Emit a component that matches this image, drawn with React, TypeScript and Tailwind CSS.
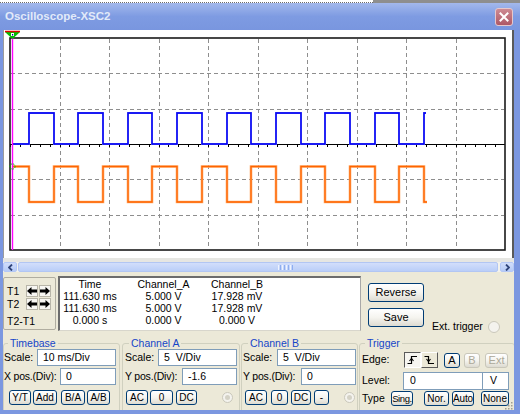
import React from "react";

const F = "font-['Liberation_Sans',Arial,sans-serif]";

function Btn({ className = "", children, disabled = false }: { className?: string; children: React.ReactNode; disabled?: boolean }) {
  return (
    <div
      className={`flex items-center justify-center rounded-[3px] border shrink-0 leading-none bg-linear-to-b from-white via-[#F5F4EF] to-[#DDDBD1] ${
        disabled ? "border-[#C9C7BA] text-[#ACA899]" : "border-[#003C74] text-black"
      } ${className}`}
    >
      {children}
    </div>
  );
}

function Inp({ className = "", children }: { className?: string; children: React.ReactNode }) {
  return (
    <div className={`h-[17px] bg-white border border-[#7F9DB9] flex items-center pl-[5px] whitespace-pre shrink-0 ${className}`}>
      {children}
    </div>
  );
}

function ArrBtn({ dir }: { dir: "l" | "r" }) {
  return (
    <div className="w-[12px] h-[12px] flex items-center justify-center bg-[#F7F6F2] border border-[#B8B5A8] shrink-0">
      <svg width="10" height="8" viewBox="0 0 10 8">
        {dir === "l" ? (
          <path d="M0 4 L4.5 0 V2.6 H10 V5.4 H4.5 V8 Z" fill="#000" />
        ) : (
          <path d="M10 4 L5.5 0 V2.6 H0 V5.4 H5.5 V8 Z" fill="#000" />
        )}
      </svg>
    </div>
  );
}

function Radio({ dot = true, className = "" }: { dot?: boolean; className?: string }) {
  return (
    <div className={`w-[11px] h-[11px] rounded-full border border-[#CAC8BB] bg-[#F4F3EE] flex items-center justify-center shrink-0 ${className}`}>
      {dot && <div className="w-[5px] h-[5px] rounded-full bg-[#D4D2C6]" />}
    </div>
  );
}

function Plot() {
  const plotL = 6;
  const plotR = 501;
  const plotT = 8;
  const plotB = 220;
  const midY = 114;
  const vx = Array.from({ length: 9 }, (_, i) => Math.round(plotL + 49.5 * (i + 1)) + 0.5);
  const hy = [1, 2, 4, 5].map((j) => Math.round(plotT + (212 / 6) * j) + 0.5);
  const ticks = Array.from({ length: 50 }, (_, i) => Math.round(plotL + 9.9 * i) + 0.5);
  const rises = Array.from({ length: 9 }, (_, k) => Math.round(25 + 49.4 * k));
  let blue = `M8 ${midY}`;
  let orange = `M8 136.5`;
  for (let k = 0; k < 8; k++) {
    const r = rises[k];
    const f = Math.round(25 + 49.4 * k + 24.6);
    blue += ` H${r} V83 H${f} V${midY}`;
    orange += ` H${r} V172 H${f} V136.5`;
  }
  const r8 = rises[8];
  blue += ` H${r8} V83 H${r8 + 2}`;
  orange += ` H${r8} V172 H${r8 + 3}`;

  return (
    <svg width="508" height="228" viewBox="0 0 508 228" className="block">
      <rect x="0" y="0" width="508" height="228" fill="#ffffff" />
      {vx.map((x) => (
        <line key={"v" + x} x1={x} y1={plotT + 1} x2={x} y2={plotB - 1} stroke="#8E8E8E" strokeWidth="1" strokeDasharray="4 3" />
      ))}
      {hy.map((y) => (
        <line key={"h" + y} x1={plotL + 1} y1={y} x2={plotR - 1} y2={y} stroke="#8E8E8E" strokeWidth="1" strokeDasharray="4 3" />
      ))}
      <line x1={plotL} y1={midY + 0.5} x2={plotR} y2={midY + 0.5} stroke="#000" strokeWidth="1.2" />
      {ticks.map((x) => (
        <line key={"t" + x} x1={x} y1={midY + 1} x2={x} y2={midY + 3} stroke="#000" strokeWidth="1" />
      ))}
      <rect x={plotL} y={plotT} width={plotR - plotL} height={plotB - plotT} fill="none" stroke="#1A1A1A" strokeWidth="1.6" />
      <path d={orange} fill="none" stroke="#FFB070" strokeWidth="2.6" />
      <path d={orange} fill="none" stroke="#FF6400" strokeWidth="1.3" />
      <path d={blue} fill="none" stroke="#6A6AFF" strokeWidth="2" />
      <path d={blue} fill="none" stroke="#0000F0" strokeWidth="1.3" />
      <line x1="8.5" y1={plotT} x2="8.5" y2={plotB} stroke="#FF00FF" strokeWidth="1.4" />
      <circle cx="8.5" cy="136.5" r="2.6" fill="none" stroke="#00C000" strokeWidth="1" strokeDasharray="1.5 1" />
      <polygon points="1,2 16,2 8.5,9" fill="#00C000" />
      <line x1="1" y1="1.5" x2="16" y2="1.5" stroke="#E00000" strokeWidth="1.5" />
      <rect x="7" y="3" width="3" height="3" fill="#ffffff" />
      <rect x="8" y="4" width="1.2" height="1.5" fill="#0000A0" />
    </svg>
  );
}

export default function App() {
  return (
    <div className={`w-[520px] h-[414px] flex flex-col overflow-hidden ${F}`}>
      <div className="h-[3px] flex shrink-0">
        <div className="w-[373px] bg-white border-b border-dotted border-[#6A6A6A]" />
        <div className="flex-1 bg-[#8E8E8E]" />
      </div>
      <div className="flex-1 flex flex-col bg-[#7B97E0] min-h-0">
        {/* Title bar */}
        <div className="h-[27px] shrink-0 flex items-center justify-between pl-[5px] pr-[7px] bg-linear-to-b from-[#A3B8EC] via-[#7E9BE2] to-[#7996DF]">
          <span className="text-[11.5px] font-bold text-[#E2EAF9]">Oscilloscope-XSC2</span>
          <div className="w-[18px] h-[18px] rounded-[3px] border border-[#E6C8CC] bg-linear-to-b from-[#CD8A93] to-[#AE5866] flex items-center justify-center">
            <svg width="10" height="10" viewBox="0 0 10 10">
              <path d="M1.5 1.5 L8.5 8.5 M8.5 1.5 L1.5 8.5" stroke="#fff" strokeWidth="2" strokeLinecap="square" />
            </svg>
          </div>
        </div>
        {/* Body */}
        <div className="flex-1 flex flex-col pl-[3px] pr-[6px] pb-[4px] min-h-0">
          <div className="flex-1 flex flex-col bg-[#ECE9D8] min-h-0">
            <div className="h-[228px] shrink-0 bg-white border-l border-l-[#9C9C9C] border-r-2 border-r-[#5A5A5A]">
              <Plot />
            </div>
            <div className="h-[4px] shrink-0 bg-[#E6E6E2]" />
            {/* Scrollbar */}
            <div className="h-[10px] shrink-0 flex bg-[#F3F2EC]">
              <div className="w-[14px] h-full rounded-[2px] border border-[#B4C8F6] bg-linear-to-b from-[#D0DDFB] to-[#B6CBF7] flex items-center justify-center">
                <svg width="5" height="7" viewBox="0 0 5 7">
                  <path d="M4 0.5 L1 3.5 L4 6.5" fill="none" stroke="#30457A" strokeWidth="1.8" />
                </svg>
              </div>
              <div className="flex-1 flex pl-[1px] pr-[2px]">
                <div className="flex-1 h-full rounded-[2px] border border-[#B2C6F3] bg-linear-to-b from-[#D2DEFB] to-[#BACEF8] flex items-center pl-[259px] gap-[1px]">
                  <div className="w-[1px] h-[5px] bg-[#EEF3FE]" />
                  <div className="w-[1px] h-[5px] bg-[#8EAEF0]" />
                  <div className="w-[1px] h-[5px] bg-[#EEF3FE]" />
                  <div className="w-[1px] h-[5px] bg-[#8EAEF0]" />
                  <div className="w-[1px] h-[5px] bg-[#EEF3FE]" />
                  <div className="w-[1px] h-[5px] bg-[#8EAEF0]" />
                  <div className="w-[1px] h-[5px] bg-[#EEF3FE]" />
                  <div className="w-[1px] h-[5px] bg-[#8EAEF0]" />
                </div>
              </div>
              <div className="w-[14px] h-full rounded-[2px] border border-[#B4C8F6] bg-linear-to-b from-[#D0DDFB] to-[#B6CBF7] flex items-center justify-center">
                <svg width="5" height="7" viewBox="0 0 5 7">
                  <path d="M1 0.5 L4 3.5 L1 6.5" fill="none" stroke="#30457A" strokeWidth="1.8" />
                </svg>
              </div>
            </div>
            {/* Panel */}
            <div className="flex-1 relative overflow-hidden min-h-0 text-black text-[10.5px]">
              {/* Row 1 */}
              <div className="h-[65px] flex items-start">
                <div className="w-[53px] h-[53px] mt-[5px] border border-[#B0ADA0] rounded-[2px] pl-[3px] pt-[7px] leading-[12px] shrink-0">
                  <div className="flex items-center h-[12px]">
                    <span className="w-[19px]">T1</span>
                    <ArrBtn dir="l" />
                    <div className="w-[1px]" />
                    <ArrBtn dir="r" />
                  </div>
                  <div className="flex items-center h-[12px] mt-[1px]">
                    <span className="w-[19px]">T2</span>
                    <ArrBtn dir="l" />
                    <div className="w-[1px]" />
                    <ArrBtn dir="r" />
                  </div>
                  <div className="h-[12px] mt-[5px]">T2-T1</div>
                </div>
                <div className="ml-[2px] mt-[4px] w-[303px] h-[55px] bg-white border-t-2 border-l-2 border-b border-r border-t-[#6C6C6C] border-l-[#6C6C6C] border-b-[#D8D6CC] border-r-[#A8A8A8] leading-[12px] shrink-0">
                  <div className="grid grid-cols-[60px_87px_60px] text-center">
                    <div>Time</div>
                    <div>Channel_A</div>
                    <div>Channel_B</div>
                    <div>111.630 ms</div>
                    <div>5.000 V</div>
                    <div>17.928 mV</div>
                    <div>111.630 ms</div>
                    <div>5.000 V</div>
                    <div>17.928 mV</div>
                    <div>0.000 s</div>
                    <div>0.000 V</div>
                    <div>0.000 V</div>
                  </div>
                </div>
                <div className="ml-[7px] mt-[11px] w-[56px] flex flex-col shrink-0">
                  <Btn className="h-[19px] text-[11px]">Reverse</Btn>
                  <Btn className="h-[19px] mt-[6px] text-[11px]">Save</Btn>
                </div>
                <div className="ml-[8px] mt-[49px] h-[12px] flex items-center shrink-0">
                  <span>Ext. trigger</span>
                  <Radio dot={false} className="ml-[5px] w-[12px] h-[12px]" />
                </div>
              </div>
              {/* Row 2 */}
              <div className="flex items-start">
                {/* Timebase */}
                <fieldset className="w-[117px] h-[78px] border border-[#D0D0BF] rounded-[3px] shrink-0 min-w-0">
                  <legend className="ml-[4px] px-[2px] text-[#1546C8] text-[10.5px] leading-[12px]">Timebase</legend>
                  <div className="flex items-center h-[17px]">
                    <span className="w-[33px]">Scale:</span>
                    <Inp className="w-[79px]">10 ms/Div</Inp>
                  </div>
                  <div className="flex items-center h-[17px] mt-[2px]">
                    <span className="w-[56px] tracking-[-0.2px]">X pos.(Div):</span>
                    <Inp className="w-[56px]">0</Inp>
                  </div>
                  <div className="flex items-center h-[15px] mt-[5px] pl-[5px] text-[10px]">
                    <Btn className="w-[22px] h-[15px]">Y/T</Btn>
                    <Btn className="w-[24px] h-[15px] ml-[2px]">Add</Btn>
                    <Btn className="w-[24px] h-[15px] ml-[4px]">B/A</Btn>
                    <Btn className="w-[23px] h-[15px] ml-[2px]">A/B</Btn>
                  </div>
                </fieldset>
                {/* Channel A */}
                <fieldset className="ml-[2px] w-[118px] h-[78px] border border-[#D0D0BF] rounded-[3px] shrink-0 min-w-0">
                  <legend className="ml-[6px] px-[2px] text-[#1546C8] text-[10.5px] leading-[12px]">Channel A</legend>
                  <div className="flex items-center h-[17px] pl-[2px]">
                    <span className="w-[33px]">Scale:</span>
                    <Inp className="w-[79px]">5  V/Div</Inp>
                  </div>
                  <div className="flex items-center h-[17px] mt-[2px] pl-[2px]">
                    <span className="w-[57px] tracking-[-0.2px]">Y pos.(Div):</span>
                    <Inp className="w-[55px]">-1.6</Inp>
                  </div>
                  <div className="flex items-center h-[15px] mt-[5px] pl-[3px] text-[10px]">
                    <Btn className="w-[22px] h-[15px]">AC</Btn>
                    <Btn className="w-[23px] h-[15px] ml-[2px]">0</Btn>
                    <Btn className="w-[21px] h-[15px] ml-[3px]">DC</Btn>
                    <Radio className="ml-[25px]" />
                  </div>
                </fieldset>
                {/* Channel B */}
                <fieldset className="ml-[1px] w-[117px] h-[78px] border border-[#D0D0BF] rounded-[3px] shrink-0 min-w-0">
                  <legend className="ml-[6px] px-[2px] text-[#1546C8] text-[10.5px] leading-[12px]">Channel B</legend>
                  <div className="flex items-center h-[17px] pl-[1px]">
                    <span className="w-[34px]">Scale:</span>
                    <Inp className="w-[79px]">5  V/Div</Inp>
                  </div>
                  <div className="flex items-center h-[17px] mt-[2px] pl-[1px]">
                    <span className="w-[58px] tracking-[-0.2px]">Y pos.(Div):</span>
                    <Inp className="w-[55px]">0</Inp>
                  </div>
                  <div className="flex items-center h-[15px] mt-[5px] pl-[3px] text-[10px]">
                    <Btn className="w-[22px] h-[15px]">AC</Btn>
                    <Btn className="w-[17px] h-[15px] ml-[4px]">0</Btn>
                    <Btn className="w-[20px] h-[15px] ml-[3px]">DC</Btn>
                    <Btn className="w-[15px] h-[15px] ml-[3px]">-</Btn>
                    <Radio className="ml-[15px]" />
                  </div>
                </fieldset>
                {/* Trigger */}
                <fieldset className="ml-[1px] w-[156px] h-[78px] border border-[#D0D0BF] rounded-[3px] shrink-0 min-w-0">
                  <legend className="ml-[5px] px-[2px] text-[#1546C8] text-[10.5px] leading-[12px]">Trigger</legend>
                  <div className="flex items-center h-[16px] mt-[3px] pl-[2px]">
                    <span className="w-[42px]">Edge:</span>
                    <div className="w-[17px] h-[16px] flex items-center justify-center bg-[#F6F5F0] border border-t-[#5A5A5A] border-l-[#5A5A5A] border-b-white border-r-white shrink-0">
                      <svg width="11" height="10" viewBox="0 0 11 10">
                        <path d="M0.5 8.5 H4.5 V1.5 H10" fill="none" stroke="#000" strokeWidth="1.2" />
                        <path d="M2.5 6 L4.5 3.5 L6.5 6" fill="none" stroke="#000" strokeWidth="1.1" />
                      </svg>
                    </div>
                    <div className="w-[17px] h-[16px] flex items-center justify-center bg-[#ECE9D8] border border-t-white border-l-white border-b-[#5A5A5A] border-r-[#5A5A5A] shrink-0">
                      <svg width="11" height="10" viewBox="0 0 11 10">
                        <path d="M0.5 1.5 H4.5 V8.5 H10" fill="none" stroke="#000" strokeWidth="1.2" />
                        <path d="M2.5 4 L4.5 6.5 L6.5 4" fill="none" stroke="#000" strokeWidth="1.1" />
                      </svg>
                    </div>
                    <Btn className="w-[16px] h-[15px] ml-[6px] text-[11px]">A</Btn>
                    <Btn disabled className="w-[16px] h-[15px] ml-[4px] text-[11px]">B</Btn>
                    <Btn disabled className="w-[23px] h-[15px] ml-[5px] text-[11px]">Ext</Btn>
                  </div>
                  <div className="flex items-center h-[18px] mt-[4px] pl-[2px]">
                    <span className="w-[41px]">Level:</span>
                    <Inp className="w-[80px] h-[18px] pl-[6px]">0</Inp>
                    <div className="w-[26px] h-[18px] bg-white border border-l-0 border-[#7F9DB9] flex items-center pl-[7px] shrink-0">V</div>
                  </div>
                  <div className="flex items-center h-[15px] mt-[1px] pl-[2px] text-[10px]">
                    <span className="w-[29px] text-[10.5px]">Type</span>
                    <Btn className="w-[22px] h-[15px] text-[9.5px] tracking-[-0.4px]">Sing.</Btn>
                    <Btn className="w-[25px] h-[15px] ml-[11px]">Nor.</Btn>
                    <Btn className="w-[22px] h-[15px] ml-[3px] tracking-[-0.2px]">Auto</Btn>
                    <Btn className="w-[28px] h-[15px] ml-[7px]">None</Btn>
                  </div>
                </fieldset>
              </div>
              {/* resize grip */}
              <svg width="8" height="8" viewBox="0 0 8 8" className="absolute right-[1px] bottom-0">
                <rect x="6" y="0" width="1.5" height="1.5" fill="#A09E92" />
                <rect x="3" y="3" width="1.5" height="1.5" fill="#A09E92" />
                <rect x="6" y="3" width="1.5" height="1.5" fill="#A09E92" />
                <rect x="0" y="6" width="1.5" height="1.5" fill="#A09E92" />
                <rect x="3" y="6" width="1.5" height="1.5" fill="#A09E92" />
                <rect x="6" y="6" width="1.5" height="1.5" fill="#A09E92" />
              </svg>
            </div>
          </div>
        </div>
      </div>
    </div>
  );
}
